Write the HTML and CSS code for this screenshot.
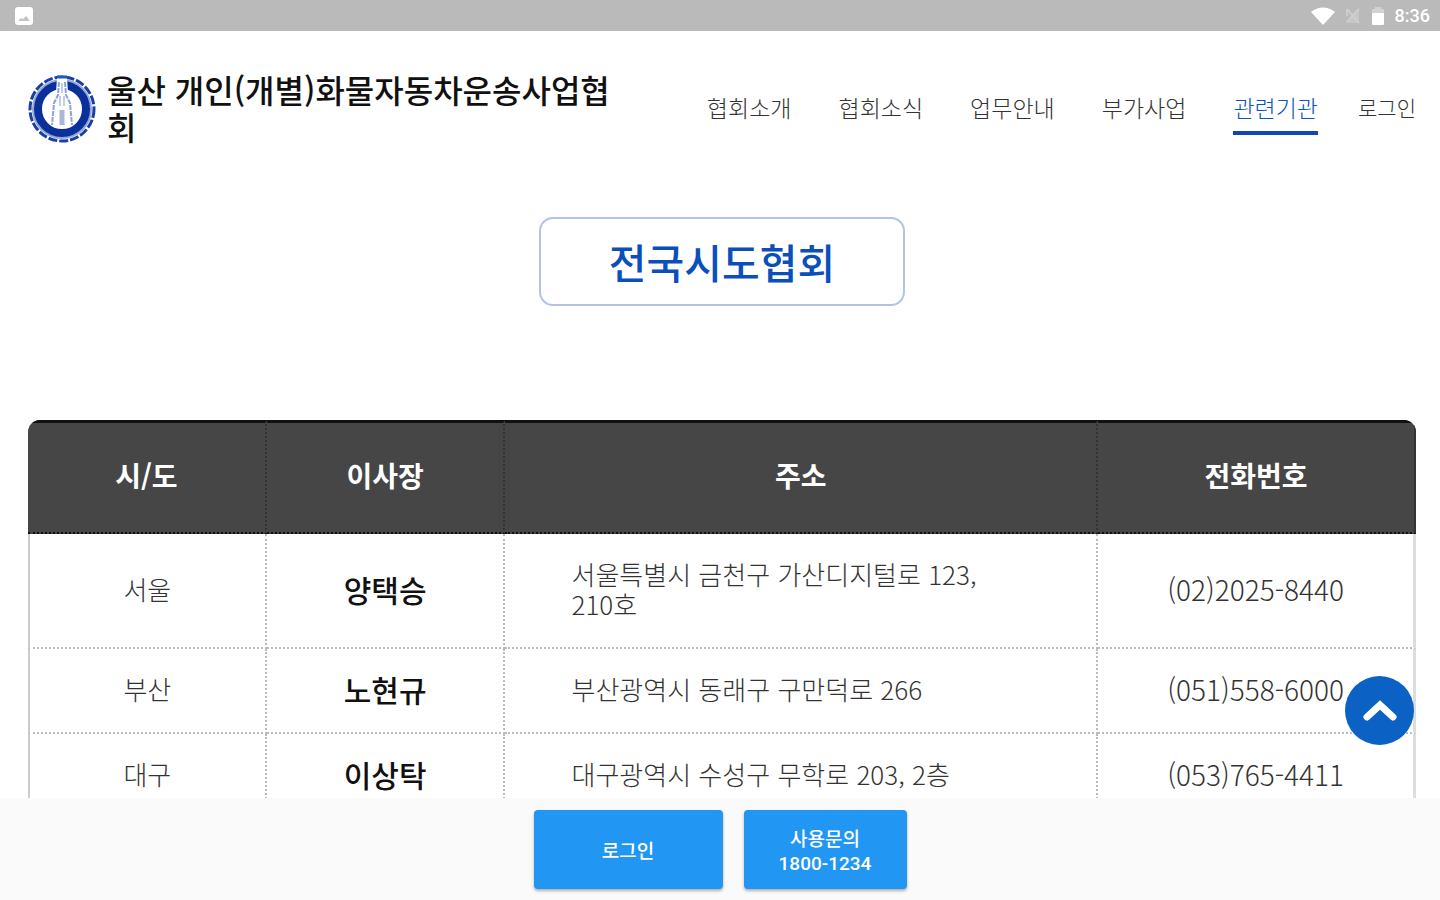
FILE: index.html
```html
<!DOCTYPE html>
<html lang="ko">
<head>
    <meta charset="UTF-8">
    <meta name="viewport" content="width=device-width, initial-scale=1.0">
    <title>전국시도협회</title>
    <link rel="stylesheet" href="styles.css">
</head>
<body>
    <div class="status-bar">
        <svg class="status-image" width="20" height="20" viewBox="0 0 20 20">
            <rect x="1" y="1" width="18" height="18" rx="3" fill="#fff"/>
            <path d="M4 15l3-3 2 1 3-3 4 5z" fill="#c4c4c4"/>
        </svg>
        <div class="status-icons">
            <svg width="24" height="20" viewBox="0 0 24 20">
                <path d="M12 19L0 6C7 0 17 0 24 6z" fill="#fff"/>
            </svg>
            <svg width="16" height="18" viewBox="0 0 16 18">
                <path d="M14 2v14H2z" fill="#c6c6c6"/>
                <path d="M2 2l12 14M2 2v7M14 2L2 15" stroke="#cecece" stroke-width="2" fill="none"/>
            </svg>
            <svg width="14" height="20" viewBox="0 0 14 20">
                <path d="M4 1h6v2h3v5H1V3h3z" fill="#d2d2d2"/>
                <rect x="1" y="7" width="12" height="12" rx="1" fill="#fff"/>
            </svg>
            <span class="status-time">8:36</span>
        </div>
    </div>

    <main class="page">
        <header class="header">
            <svg class="logo" width="68" height="68" viewBox="0 0 68 68">
                <circle cx="34" cy="34" r="32" fill="none" stroke="#1a3fa4" stroke-width="3" stroke-dasharray="9 2"/>
                <circle cx="34" cy="34" r="30" fill="#93a6d6"/>
                <circle cx="34" cy="34" r="24" fill="#fff" stroke="#0a309c" stroke-width="8"/>
                <path d="M29 3h10l1 14 5 10v24H23V27l5-10z" fill="#fff"/>
                <path d="M29 2h10" stroke="#1d5db8" stroke-width="3"/>
                <path d="M31 7l-1 13-4 8-2 22M37 7l1 13 4 8 2 22" fill="none" stroke="#8fa3d4" stroke-width="2" stroke-dasharray="5 1"/>
                <path d="M34 8v10M32 21v10M36 21v10" stroke="#c3cde8" stroke-width="2"/>
                <path d="M34 35v15" stroke="#a9b6da" stroke-width="5"/>
            </svg>
            <h1 class="site-title">울산 개인(개별)화물자동차운송사업협회</h1>
            <nav class="menu">
                <a href="#">협회소개</a>
                <a href="#">협회소식</a>
                <a href="#">업무안내</a>
                <a href="#">부가사업</a>
                <a href="#" class="active">관련기관</a>
                <a href="#" class="login-link">로그인</a>
            </nav>
        </header>

        <h2 class="page-title">전국시도협회</h2>

        <div class="table-wrap">
            <table class="office-table">
                <colgroup>
                    <col class="col-region">
                    <col class="col-chief">
                    <col class="col-address">
                    <col class="col-phone">
                </colgroup>
                <thead>
                    <tr>
                        <th>시/도</th>
                        <th>이사장</th>
                        <th>주소</th>
                        <th>전화번호</th>
                    </tr>
                </thead>
                <tbody>
                    <tr>
                        <td>서울</td>
                        <td class="chief">양택승</td>
                        <td class="address">서울특별시 금천구 가산디지털로 123, 210호</td>
                        <td class="phone">(02)2025-8440</td>
                    </tr>
                    <tr>
                        <td>부산</td>
                        <td class="chief">노현규</td>
                        <td class="address">부산광역시 동래구 구만덕로 266</td>
                        <td class="phone">(051)558-6000</td>
                    </tr>
                    <tr>
                        <td>대구</td>
                        <td class="chief">이상탁</td>
                        <td class="address">대구광역시 수성구 무학로 203, 2층</td>
                        <td class="phone">(053)765-4411</td>
                    </tr>
                </tbody>
            </table>
        </div>
    </main>

    <footer class="bottom-bar">
        <button class="top-button" aria-label="맨 위로">
            <svg width="36" height="24" viewBox="0 0 36 24">
                <path d="M5 18L18 6l13 12" fill="none" stroke="#fff" stroke-width="7" stroke-linecap="round"/>
            </svg>
        </button>
        <button class="action login">로그인</button>
        <button class="action contact">사용문의<br>1800-1234</button>
    </footer>
</body>
</html>
```

FILE: styles.css
```css
* {
    box-sizing: border-box;
}
body {
    display: flex;
    flex-direction: column;
    height: 100vh;
    margin: 0;
    background-color: #fff;
    color: #444;
    font-family: "Noto Sans CJK KR", sans-serif;
    overflow: hidden;
}

/* status bar */
.status-bar {
    display: flex;
    flex: none;
    align-items: center;
    justify-content: space-between;
    height: 31px;
    padding: 0 10px 0 14px;
    background-color: #bababa;
}
.status-icons {
    display: flex;
    align-items: center;
    gap: 10px;
}
.status-time {
    color: #fff;
    font-family: Roboto, sans-serif;
    font-size: 18px;
    font-weight: 500;
}

/* page */
.page {
    flex: 1;
    min-height: 0;
    padding: 40px 24px 0 28px;
    overflow: hidden;
}
.header {
    display: flex;
    align-items: center;
}
.logo {
    flex: none;
    margin-right: 11px;
}
.site-title {
    flex: 1;
    min-width: 0;
    margin: 0;
    padding-bottom: 2px;
    color: #111;
    font-size: 32px;
    font-weight: 500;
    line-height: 37px;
}
.menu {
    display: flex;
    align-items: center;
    gap: 47px;
    margin-left: 76px;
}
.menu a {
    padding: 7px 0;
    border-bottom: 4px solid transparent;
    color: #333;
    font-size: 23px;
    font-weight: 300;
    line-height: 34px;
    text-decoration: none;
}
.menu a.active {
    border-bottom-color: #1245b8;
    color: #0a55c4;
}
.menu a.login-link {
    margin-left: -7px;
    font-size: 21px;
}
.page-title {
    width: fit-content;
    margin: 70px auto 114px;
    padding: 12px 68px;
    border: 2px solid #b3c3e8;
    border-radius: 14px;
    color: #0b50ba;
    font-size: 41px;
    font-weight: 500;
    line-height: 61px;
}

/* table */
.table-wrap {
    border-radius: 12px 12px 0 0;
    overflow: hidden;
}
.office-table {
    width: 100%;
    border-spacing: 0;
    table-layout: fixed;
    text-align: center;
    word-break: keep-all;
}
.col-region,
.col-chief {
    width: 17.2%;
}
.col-address {
    width: 42.7%;
}
.office-table th {
    padding: 37px 0 42px;
    border-top: 3px solid #111;
    border-right: 2px dotted #333;
    border-bottom: 2px dotted #111;
    background-color: #464646;
    color: #fff;
    font-size: 28px;
    font-weight: 700;
    line-height: 30px;
}
.office-table td {
    padding: 25px 0 28px;
    border-right: 2px dotted #bbb;
    border-bottom: 2px dotted #bbb;
    color: #333;
    font-size: 26px;
    font-weight: 300;
    line-height: 30px;
}
.office-table td:first-child {
    border-left: 2px solid #ccc;
}
.office-table th:last-child {
    border-right: 2px solid #333;
}
.office-table td:last-child {
    border-right: 3px solid #ddd;
}
.office-table .chief {
    color: #111;
    font-size: 30px;
    font-weight: 500;
}
.office-table .phone {
    font-size: 28px;
}
.office-table .address {
    padding-left: 66px;
    padding-right: 66px;
    text-align: left;
}

/* bottom bar */
.bottom-bar {
    position: relative;
    display: flex;
    flex: none;
    justify-content: center;
    gap: 21px;
    padding: 12px 0 11px;
    background-color: #fafafa;
}
.action {
    height: 79px;
    padding: 4px 0 0;
    border: none;
    border-radius: 4px;
    background-color: #2196f3;
    box-shadow: 0 2px 3px rgba(0, 0, 0, 0.3);
    color: #fff;
    font-family: Roboto, "Noto Sans CJK KR", sans-serif;
    font-size: 19px;
    font-weight: 500;
    line-height: 24px;
    cursor: pointer;
}
.login {
    width: 189px;
}
.contact {
    width: 163px;
}
.top-button {
    position: absolute;
    right: 26px;
    bottom: 155px;
    display: flex;
    align-items: center;
    justify-content: center;
    width: 69px;
    height: 69px;
    padding: 0;
    border: none;
    border-radius: 50%;
    background-color: #0b62c4;
    cursor: pointer;
}
```
